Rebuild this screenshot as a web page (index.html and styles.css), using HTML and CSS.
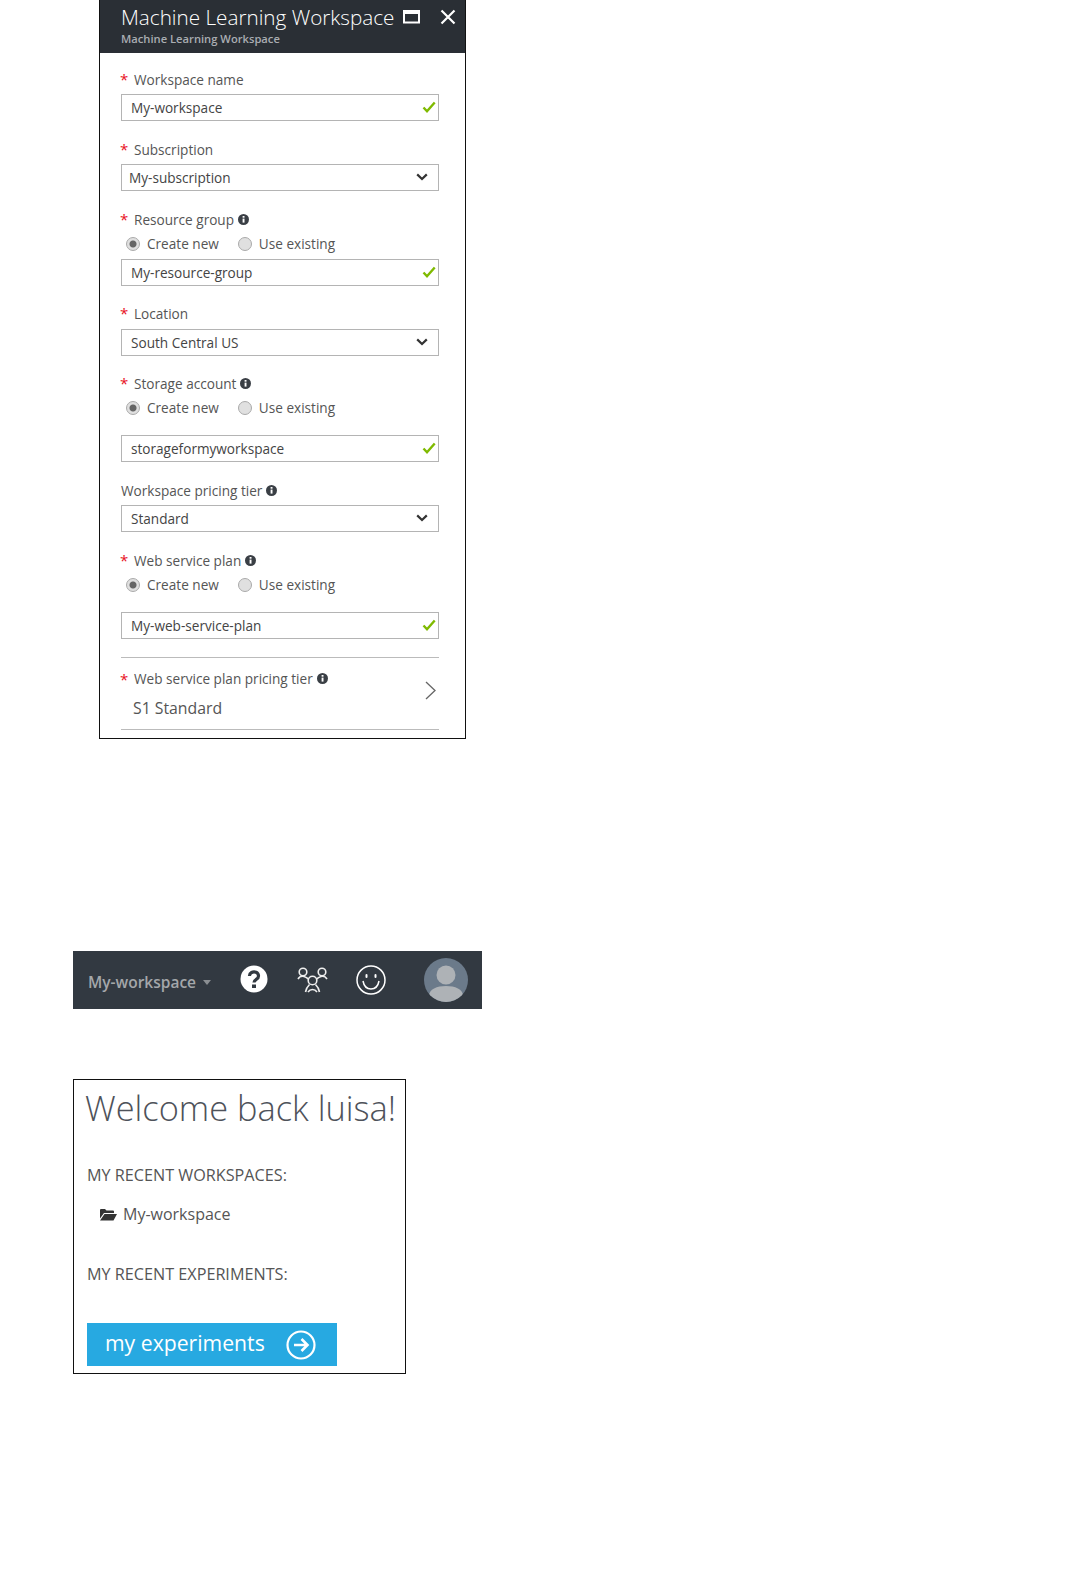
FILE: index.html
```html
<!DOCTYPE html>
<html lang="en">
<head>
    <meta charset="UTF-8">
    <meta name="viewport" content="width=device-width, initial-scale=1.0">
    <title>Machine Learning Workspace</title>
    <link rel="stylesheet" href="styles.css">
</head>
<body>

    <svg class="defs" width="0" height="0">
        <symbol id="check" viewBox="0 0 14 12"><path d="M1.500 6.500 5 10.200 12.700 1.500" fill="none" stroke="#7fba00" stroke-width="2.400"/></symbol>
        <symbol id="chevron" viewBox="0 0 12 8"><path d="M1.200 1.400 6 6 10.800 1.400" fill="none" stroke="#333" stroke-width="2.200"/></symbol>
        <symbol id="info" viewBox="0 0 11 11"><circle cx="5.500" cy="5.500" r="5.500" fill="#3a3f45"/><rect x="4.600" y="4.600" width="1.900" height="4" fill="#fff"/><rect x="4.600" y="2" width="1.900" height="1.700" fill="#fff"/></symbol>
    </svg>

    <!-- Workspace blade -->
    <section class="blade">
        <header class="blade-header">
            <div class="blade-titles">
                <h1>Machine Learning Workspace</h1>
                <p>Machine Learning Workspace</p>
            </div>
            <svg class="blade-max" width="17" height="15" viewBox="0 0 17 15"><path d="M1 3.500h15v10H1z" fill="none" stroke="#fff" stroke-width="2"/><rect x="0" y="1" width="17" height="4" fill="#fff"/></svg>
            <svg class="blade-close" width="16" height="16" viewBox="0 0 16 16"><path d="M1.500 1.500 14.500 14.500M14.500 1.500 1.500 14.500" stroke="#fff" stroke-width="2.200"/></svg>
        </header>

        <div class="blade-body">
            <div class="field">
                <label><span class="req">*</span>Workspace name</label>
                <div class="input">My-workspace<svg class="tick"><use href="#check"/></svg></div>
            </div>

            <div class="field">
                <label><span class="req">*</span>Subscription</label>
                <div class="input narrow">My-subscription<svg class="chev"><use href="#chevron"/></svg></div>
            </div>

            <div class="field close-next">
                <label><span class="req">*</span>Resource group<svg class="info"><use href="#info"/></svg></label>
                <div class="radios">
                    <span class="radio on">Create new</span>
                    <span class="radio">Use existing</span>
                </div>
                <div class="input tight">My-resource-group<svg class="tick"><use href="#check"/></svg></div>
            </div>

            <div class="field close-next">
                <label><span class="req">*</span>Location</label>
                <div class="input wide-gap">South Central US<svg class="chev"><use href="#chevron"/></svg></div>
            </div>

            <div class="field">
                <label><span class="req">*</span>Storage account<svg class="info"><use href="#info"/></svg></label>
                <div class="radios">
                    <span class="radio on">Create new</span>
                    <span class="radio">Use existing</span>
                </div>
                <div class="input loose">storageformyworkspace<svg class="tick"><use href="#check"/></svg></div>
            </div>

            <div class="field">
                <label>Workspace pricing tier<svg class="info"><use href="#info"/></svg></label>
                <div class="input">Standard<svg class="chev"><use href="#chevron"/></svg></div>
            </div>

            <div class="field">
                <label><span class="req">*</span>Web service plan<svg class="info"><use href="#info"/></svg></label>
                <div class="radios">
                    <span class="radio on">Create new</span>
                    <span class="radio">Use existing</span>
                </div>
                <div class="input loose">My-web-service-plan<svg class="tick"><use href="#check"/></svg></div>
            </div>

            <div class="picker">
                <div>
                    <label><span class="req">*</span>Web service plan pricing tier<svg class="info"><use href="#info"/></svg></label>
                    <p class="picker-value">S1 Standard</p>
                </div>
                <svg class="picker-arrow" width="11" height="19" viewBox="0 0 11 19"><path d="M1 1 10 9.500 1 18" fill="none" stroke="#666" stroke-width="1.300"/></svg>
            </div>
        </div>
    </section>

    <!-- Top bar -->
    <nav class="topbar">
        <span class="topbar-name">My-workspace</span>
        <span class="caret"></span>
        <svg class="tb-help" width="28" height="28" viewBox="0 0 28 28">
            <circle cx="14" cy="14" r="13.500" fill="#fff"/>
            <path d="M9.500 11a4.500 4 0 1 1 7 3.200c-1.500 1-2.500 1.600-2.500 3.300" fill="none" stroke="#323941" stroke-width="3.200"/>
            <rect x="12" y="19.500" width="4" height="3.500" fill="#323941"/>
        </svg>
        <svg class="tb-people" width="31" height="27" viewBox="0 0 31 27" fill="none" stroke="#eee" stroke-width="1.600">
            <circle cx="6" cy="6" r="3.800"/><circle cx="25" cy="6" r="3.800"/><circle cx="15.500" cy="14.500" r="4.300"/>
            <path d="M1 13c1.500-2.500 4-3 6-2.500 1.500.4 3 1.400 4.500 2.500M30 13c-1.500-2.500-4-3-6-2.500-1.500.4-3 1.400-4.500 2.500M8.500 26c.5-3 2-5.500 4-7.500M22.500 26c-.5-3-2-5.500-4-7.500M11 26c1-1.500 2.500-2.500 4.500-2.500s3.500 1 4.500 2.500"/>
        </svg>
        <svg class="tb-smile" width="30" height="30" viewBox="0 0 30 30" fill="none" stroke="#fff" stroke-width="1.500">
            <circle cx="15" cy="15" r="14"/>
            <path d="M7 16c1 5.500 4.500 8 8 8s7-2.500 8-8"/>
            <rect x="9.500" y="9" width="2" height="4" rx="1" fill="#fff" stroke="none"/>
            <rect x="18.500" y="9" width="2" height="4" rx="1" fill="#fff" stroke="none"/>
        </svg>
        <svg class="tb-avatar" width="44" height="44" viewBox="0 0 44 44">
            <defs><clipPath id="round"><circle cx="22" cy="22" r="22"/></clipPath></defs>
            <circle cx="22" cy="22" r="22" fill="#6b7a8a"/>
            <g clip-path="url(#round)" fill="#aeb2b6">
                <circle cx="22" cy="17" r="9.500"/>
                <path d="M5 44v-6c0-7 8-10 17-10s17 3 17 10v6z"/>
            </g>
        </svg>
    </nav>

    <!-- Welcome card -->
    <section class="welcome">
        <h2>Welcome back luisa!</h2>
        <h3 class="recent-workspaces">MY RECENT WORKSPACES:</h3>
        <p class="recent-item">
            <svg width="17" height="13" viewBox="0 0 17 13"><path d="M0 2a1 1 0 0 1 1-1h4l1.500 1.500H13a1 1 0 0 1 1 1V5H4L0 10.500zM4.500 6H17l-3.500 6.500H0z" fill="#333"/></svg>
            My-workspace
        </p>
        <h3 class="recent-experiments">MY RECENT EXPERIMENTS:</h3>
        <a class="cta">my experiments
            <svg width="30" height="30" viewBox="0 0 30 30" fill="none" stroke="#fff" stroke-width="2.200">
                <circle cx="15" cy="15" r="13.500"/>
                <path d="M8 15h13M15.500 9l6 6-6 6" stroke-width="2.600"/>
            </svg>
        </a>
    </section>

</body>
</html>
```

FILE: styles.css
```css
body {
    font-family: 'Open Sans', 'Noto Sans', sans-serif;
    background-color: #fff;
    margin: 0;
    height: 1570px;
    color: #555;
    overflow: hidden;
}

.defs {
    display: block;
    height: 0;
}

h1, h2, h3, p {
    margin: 0;
    font-weight: 400;
}

/* Blade */
.blade {
    box-sizing: border-box;
    width: 367px;
    height: 739px;
    margin-left: 99px;
    border: 1px solid #111;
    border-top: none;
}

.blade-header {
    display: flex;
    height: 53px;
    background-color: #2a2f35;
    color: #fff;
    padding-left: 21px;
}

.blade-titles {
    width: 282px;
}

.blade-titles h1 {
    font-size: 20.700px;
    font-weight: 300;
    line-height: 28px;
    padding-top: 3px;
    white-space: nowrap;
}

.blade-titles p {
    font-size: 11.200px;
    font-weight: 600;
    line-height: 15px;
    color: #a9adb2;
    white-space: nowrap;
}

.blade-max {
    margin-top: 9px;
}

.blade-close {
    margin: 9px 0 0 20px;
}

.blade-body {
    padding: 17px 26px 0 21px;
}

.field {
    margin-bottom: 19px;
}

.field.close-next {
    margin-bottom: 18px;
}

label {
    box-sizing: border-box;
    display: flex;
    align-items: center;
    height: 20px;
    padding-bottom: 2px;
    font-size: 13.600px;
    white-space: nowrap;
}

.req {
    color: #e81123;
    width: 14px;
    margin-left: -1px;
    font-size: 15px;
    line-height: 14px;
    height: 20px;
    padding-top: 3px;
    box-sizing: border-box;
}

.info {
    width: 11px;
    height: 11px;
    margin-left: 4px;
}

.input {
    box-sizing: border-box;
    display: flex;
    align-items: center;
    justify-content: space-between;
    height: 27px;
    margin-top: 4px;
    padding: 0 2px 1px 9px;
    border: 1px solid #b4b4b4;
    font-size: 13.600px;
    color: #444;
}

.input.narrow {
    padding-left: 7px;
}

.input.wide-gap {
    margin-top: 5px;
}

.input.tight {
    margin-top: 5px;
}

.input.loose {
    margin-top: 17px;
}

.tick {
    width: 14px;
    height: 12px;
}

.chev {
    width: 12px;
    height: 8px;
    margin-right: 8px;
}

.radios {
    box-sizing: border-box;
    display: flex;
    gap: 19px;
    margin: 4px 0 0 5px;
    height: 20px;
    padding-bottom: 1px;
    align-items: center;
    font-size: 13.600px;
}

.radio {
    display: flex;
    align-items: center;
    color: #555;
}

.radio::before {
    content: "";
    box-sizing: border-box;
    width: 14px;
    height: 14px;
    margin-right: 7px;
    border-radius: 50%;
    border: 1px solid #aaa;
    background-color: #e0e0e0;
}

.radio.on::before {
    background: radial-gradient(circle, #666 0 3px, #e0e0e0 4px);
}

.picker {
    display: flex;
    justify-content: space-between;
    align-items: center;
    box-sizing: border-box;
    height: 73px;
    padding: 0 3px 0 0;
    margin-top: -1px;
    border-top: 1px solid #bbb;
    border-bottom: 1px solid #bbb;
}

.picker-arrow {
    margin-top: -7px;
}

.picker-value {
    margin: 8px 0 0 12px;
    font-size: 15.800px;
    line-height: 20px;
    color: #555;
}

/* Top bar */
.topbar {
    display: flex;
    align-items: center;
    width: 409px;
    height: 58px;
    margin: 212px 0 0 73px;
    padding-left: 15px;
    box-sizing: border-box;
    background-color: #323941;
}

.topbar-name {
    font-size: 15.500px;
    font-weight: 600;
    color: #a4a7aa;
    width: 108px;
    white-space: nowrap;
    padding-top: 3px;
}

.caret {
    width: 0;
    height: 0;
    margin: 5px 0 0 7px;
    border: 4.500px solid transparent;
    border-top: 5px solid #8a8e92;
    border-bottom: none;
}

.tb-help {
    margin: -3px 0 0 29px;
}

.tb-people {
    margin: -1px 0 0 29px;
}

.tb-smile {
    margin: 0 0 0 28px;
}

.tb-avatar {
    margin: -1px 0 0 38px;
}

/* Welcome card */
.welcome {
    box-sizing: border-box;
    width: 333px;
    height: 295px;
    margin: 70px 0 0 73px;
    padding: 0 0 0 13px;
    border: 1px solid #111;
}

.welcome h2 {
    margin: 6px 0 0 -2px;
    font-size: 34.400px;
    font-weight: 300;
    line-height: 44px;
    color: #4e525a;
    white-space: nowrap;
}

.welcome h3 {
    font-size: 16.200px;
    line-height: 22px;
    color: #555;
    white-space: nowrap;
}

.recent-workspaces {
    margin-top: 34px;
}

.recent-item {
    display: flex;
    align-items: center;
    gap: 6px;
    margin: 17px 0 0 13px;
    font-size: 16px;
    line-height: 22px;
}

.recent-experiments {
    margin-top: 38px;
}

.cta {
    display: flex;
    align-items: center;
    justify-content: space-between;
    box-sizing: border-box;
    width: 250px;
    height: 43px;
    margin-top: 38px;
    padding: 0 21px 4px 18px;
    background-color: #27a9e1;
    color: #fff;
    font-size: 21.200px;
}

.cta svg {
    margin-bottom: -4px;
}
```
